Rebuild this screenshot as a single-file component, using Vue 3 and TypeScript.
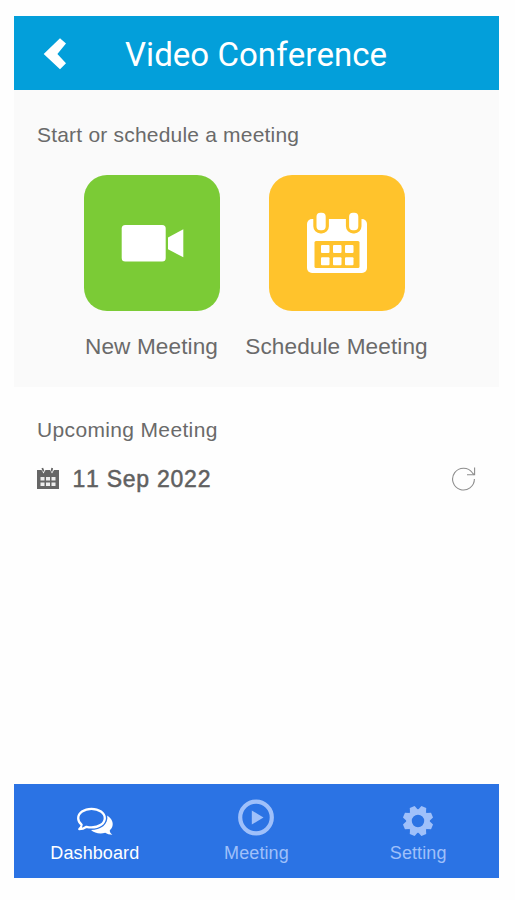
<script setup lang="ts">
interface Tab {
  id: 'dashboard' | 'meeting' | 'setting'
  label: string
}

const tabs: Tab[] = [
  { id: 'dashboard', label: 'Dashboard' },
  { id: 'meeting', label: 'Meeting' },
  { id: 'setting', label: 'Setting' },
]
const activeTab: Tab['id'] = 'dashboard'
const today = '11 Sep 2022'
const gearTeeth = [22.5, 67.5, 112.5, 157.5, 202.5, 247.5, 292.5, 337.5]
</script>

<template>
  <div class="screen">
    <header class="bar">
      <svg class="back" viewBox="0 0 24 32" aria-hidden="true">
        <path d="M17 .3 23 5.6 14.4 16 23 25.2 17 31.3 .7 16Z" fill="#fff" />
      </svg>
      <h1>Video Conference</h1>
    </header>

    <section class="start">
      <p class="hint">Start or schedule a meeting</p>
      <div class="actions">
        <div class="action">
          <div class="tile green">
            <svg class="tile-icon" viewBox="0 0 136 136" aria-hidden="true">
              <rect x="37.7" y="50" width="44" height="36.5" rx="3.5" fill="#fff" />
              <path d="M84 62.5 99.3 54.3V82.3L84 74.3Z" fill="#fff" />
            </svg>
          </div>
          <span>New Meeting</span>
        </div>
        <div class="action">
          <div class="tile yellow">
            <svg class="tile-icon" viewBox="0 0 136 136" aria-hidden="true">
              <rect x="38" y="44" width="60" height="54" rx="5" fill="#fff" />
              <g fill="#fff" stroke="#ffc32c" stroke-width="3.2">
                <rect x="45.9" y="36.2" width="12.4" height="20.6" rx="5.5" />
                <rect x="78.5" y="36.2" width="12.4" height="20.6" rx="5.5" />
              </g>
              <rect x="45.5" y="66" width="45" height="27" rx="1.5" fill="#ffc32c" />
              <g fill="#fff">
                <rect x="52" y="70" width="8.5" height="8" rx="1" />
                <rect x="64" y="70" width="8.5" height="8" rx="1" />
                <rect x="76" y="70" width="8.5" height="8" rx="1" />
                <rect x="52" y="82.3" width="8.5" height="8" rx="1" />
                <rect x="64" y="82.3" width="8.5" height="8" rx="1" />
                <rect x="76" y="82.3" width="8.5" height="8" rx="1" />
              </g>
            </svg>
          </div>
          <span>Schedule Meeting</span>
        </div>
      </div>
    </section>

    <main class="upcoming">
      <h2>Upcoming Meeting</h2>
      <div class="date-row">
        <svg class="cal" viewBox="0 0 22 23" aria-hidden="true">
          <path d="M0 3H4.5L6.5 6.5 8.5 3H13L15 6.5 17 3H22V22H0Z" fill="#666" />
          <path d="M5.3 1 6.6 4.5M15.2 1 14.5 4.5" stroke="#666" stroke-width="1.8" />
          <path d="M3.5 10H7.5V13.5H3.5ZM9 10H13V13.5H9ZM14.5 10H18.5V13.5H14.5ZM3.5 15.5H7.5V19H3.5ZM9 15.5H13V19H9ZM14.5 15.5H18.5V19H14.5Z" fill="#eee" />
        </svg>
        <span class="date">{{ today }}</span>
        <svg class="refresh" viewBox="0 0 26 26" fill="none" stroke="#8d8d8d" stroke-width="1.1" aria-hidden="true">
          <path d="M23.4 13A10.9 10.9 0 1 1 21.4 6.8L23.2 8.8" />
          <path d="M23.6 1.5V8.8H16" />
        </svg>
      </div>
    </main>

    <nav class="tabs">
      <div v-for="tab in tabs" :key="tab.id" class="tab" :class="{ active: tab.id === activeTab }">
        <svg v-if="tab.id === 'dashboard'" class="tab-icon" viewBox="0 -1 40 40" aria-hidden="true">
          <path d="M32.2 12.5C38.8 16.5 39.3 23.5 34.8 27.2 34.6 29 35.7 30.5 37.4 31.8 34.5 31.8 32 31 30.2 29.8 24.8 31.2 19.2 30 16 27 25.5 27 33.8 21.6 32.2 12.5Z" fill="currentColor" />
          <path d="M16.5 5.8C24 5.8 29.8 10 29.8 15.2S24 24.4 16.5 24.4C14.7 24.4 13 24.2 11.5 23.8 9.2 25.4 6.7 26.2 4.3 26.2 5.8 24.8 6.5 23.4 6.6 21.7 4.4 20 3.2 17.8 3.2 15.2 3.2 10 9 5.8 16.5 5.8Z" fill="none" stroke="currentColor" stroke-width="2.3" stroke-linejoin="round" />
        </svg>
        <svg v-else-if="tab.id === 'meeting'" class="tab-icon" viewBox="0 -.5 40 40" aria-hidden="true">
          <circle cx="20" cy="15" r="15.8" fill="none" stroke="currentColor" stroke-width="4.2" />
          <path d="M15.8 8 27.5 15 15.8 22Z" fill="currentColor" />
        </svg>
        <svg v-else class="tab-icon" viewBox="0 -1 40 40" aria-hidden="true">
          <circle cx="20" cy="18" r="9" fill="none" stroke="currentColor" stroke-width="5.6" />
          <path
            v-for="angle in gearTeeth"
            :key="angle"
            d="M15.7 7.5 17.4 2.8H22.6L24.3 7.5Z"
            fill="currentColor"
            :transform="`rotate(${angle} 20 18)`"
          />
        </svg>
        <span>{{ tab.label }}</span>
      </div>
    </nav>
  </div>
</template>

<style>
body {
  margin: 0;
  background: #fff;
}
</style>

<style scoped>
.screen {
  box-sizing: border-box;
  height: 900px;
  padding: 16px 16px 22px 14px;
  display: flex;
  flex-direction: column;
  background: #fefefe;
  font-family: 'Liberation Sans', Arial, sans-serif;
  color: #6a6a6a;
  font-kerning: none;
}
h1,
h2,
p {
  margin: 0;
  font-weight: 400;
}
.bar {
  flex: none;
  height: 74px;
  display: flex;
  align-items: center;
  padding-left: 29px;
  background: #039fda;
}
.back {
  flex: none;
  width: 24px;
  height: 32px;
  margin-top: 2px;
}
h1 {
  margin-left: 58px;
  padding-top: 3px;
  font-family: Roboto, sans-serif;
  font-size: 33px;
  line-height: 40px;
  letter-spacing: 0.05px;
  color: #fff;
  white-space: nowrap;
}
.start {
  flex: none;
  box-sizing: border-box;
  height: 297px;
  padding: 33px 23px 0;
  background: #fafafa;
}
.hint,
h2 {
  font-size: 21px;
  line-height: 24px;
  letter-spacing: 0.2px;
}
.actions {
  display: flex;
  margin: 28px 0 0 22px;
}
.action {
  width: 185px;
  display: flex;
  flex-direction: column;
  align-items: center;
}
.tile {
  width: 136px;
  height: 136px;
  border-radius: 23px;
}
.tile-icon {
  display: block;
  width: 136px;
  height: 136px;
}
.green {
  background: #7bcb36;
}
.yellow {
  background: #ffc32c;
}
.action span {
  margin-top: 23px;
  font-size: 22.6px;
  line-height: 26px;
  letter-spacing: 0.1px;
  white-space: nowrap;
}
.upcoming {
  flex: 1;
  padding: 31px 22px 0 23px;
}
h2 {
  letter-spacing: 0.35px;
}
.date-row {
  display: flex;
  align-items: center;
  height: 28px;
  margin-top: 23px;
}
.cal {
  width: 22px;
  height: 23px;
  margin-top: -2px;
}
.date {
  margin-left: 13.5px;
  padding-top: 1px;
  font-size: 23px;
  letter-spacing: 0.75px;
  color: #606060;
  -webkit-text-stroke: 0.5px #606060;
}
.refresh {
  width: 26px;
  height: 26px;
  margin-left: auto;
}
.tabs {
  flex: none;
  height: 94px;
  display: grid;
  grid-template-columns: repeat(3, 1fr);
  background: #2b73e4;
}
.tab {
  display: flex;
  flex-direction: column;
  align-items: center;
  padding-top: 18px;
  color: #9fc0fa;
}
.active {
  color: #fff;
}
.tab-icon {
  width: 40px;
  height: 40px;
  overflow: visible;
}
.tab span {
  margin-top: 1px;
  font-size: 18px;
  line-height: 21px;
  letter-spacing: 0.1px;
}
</style>
